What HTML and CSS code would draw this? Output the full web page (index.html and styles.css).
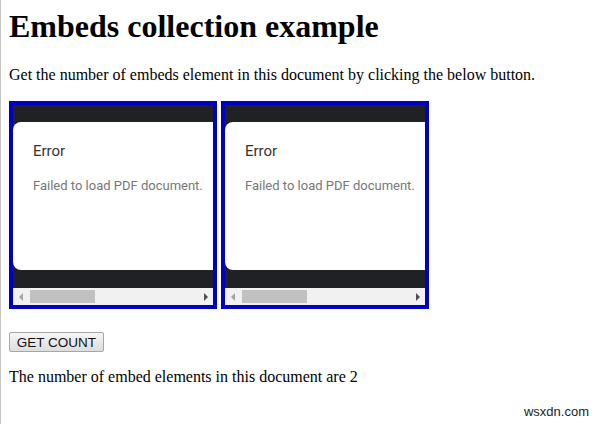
FILE: index.html
```html
<!DOCTYPE html>
<html>
<head>
<meta charset="utf-8">
<title>Embeds collection example</title>
<link rel="stylesheet" href="styles.css">
</head>
<body>
<h1 class="title">Embeds collection example</h1>
<p class="intro">Get the number of embeds element in this document by clicking the below button.</p>
<div class="embeds">
  <div class="embed">
    <div class="viewer">
      <div class="card">
        <div class="err-title">Error</div>
        <div class="err-msg">Failed to load PDF document.</div>
      </div>
    </div>
    <div class="hscroll">
      <span class="arrow"><span class="tri tri-left"></span></span>
      <span class="thumb"></span>
      <span class="fill"></span>
      <span class="arrow"><span class="tri tri-right"></span></span>
    </div>
  </div>
  <div class="embed">
    <div class="viewer">
      <div class="card">
        <div class="err-title">Error</div>
        <div class="err-msg">Failed to load PDF document.</div>
      </div>
    </div>
    <div class="hscroll">
      <span class="arrow"><span class="tri tri-left"></span></span>
      <span class="thumb"></span>
      <span class="fill"></span>
      <span class="arrow"><span class="tri tri-right"></span></span>
    </div>
  </div>
</div>
<button class="count-btn" type="button">GET COUNT</button>
<p class="result">The number of embed elements in this document are 2</p>
<div class="watermark">wsxdn.com</div>
</body>
</html>
```
FILE: styles.css
```css
html {
  height: 100%;
  border-left: 1px solid #c4c4c4;
  background: #ffffff;
}
body {
  margin: 8px;
  font-family: "Liberation Serif", "Times New Roman", serif;
  font-size: 16px;
  color: #000;
}
.title {
  margin: 0 0 21px;
  font-size: 32px;
  font-weight: bold;
}
.intro {
  margin: 0;
}
.embeds {
  display: flex;
  gap: 4px;
  margin-top: 17px;
}
.embed {
  width: 200px;
  height: 200px;
  border: 4px solid #0000c4;
  background: #202124;
  display: flex;
  flex-direction: column;
  overflow: hidden;
}
.viewer {
  padding: 17px 0 18px;
}
.card {
  height: 148px;
  box-sizing: border-box;
  background: #fff;
  border-radius: 8px 0 0 8px;
  padding: 20px 0 0 20px;
  font-family: Roboto, "Liberation Sans", sans-serif;
}
.err-title {
  font-size: 15px;
  line-height: 18px;
  color: #333;
}
.err-msg {
  margin-top: 18px;
  font-size: 13px;
  line-height: 15px;
  color: #777;
  white-space: nowrap;
}
.hscroll {
  height: 17px;
  background: #f1f1f1;
  display: flex;
  align-items: center;
}
.arrow {
  width: 15px;
  height: 17px;
  display: flex;
  align-items: center;
  justify-content: center;
}
.tri {
  width: 0;
  height: 0;
  border-top: 4px solid transparent;
  border-bottom: 4px solid transparent;
}
.tri-left {
  border-right: 4px solid #a3a3a3;
}
.tri-right {
  border-left: 4px solid #505050;
}
.thumb {
  margin-left: 2px;
  width: 65px;
  height: 13px;
  background: #c1c1c1;
}
.fill {
  flex: 1;
}
.count-btn {
  display: block;
  margin-top: 23px;
  width: 95px;
  height: 20px;
  padding: 0;
  font-family: "Liberation Sans", Arial, sans-serif;
  font-size: 13.5px;
  color: #111;
  background: linear-gradient(#f6f6f6, #dddddd);
  border: 1px solid #a6a6a6;
  border-radius: 2px;
}
.result {
  margin: 16px 0 0;
}
.watermark {
  position: absolute;
  right: 11px;
  bottom: 5px;
  font-family: "Liberation Sans", Arial, sans-serif;
  font-size: 13px;
  color: #222;
}
```
